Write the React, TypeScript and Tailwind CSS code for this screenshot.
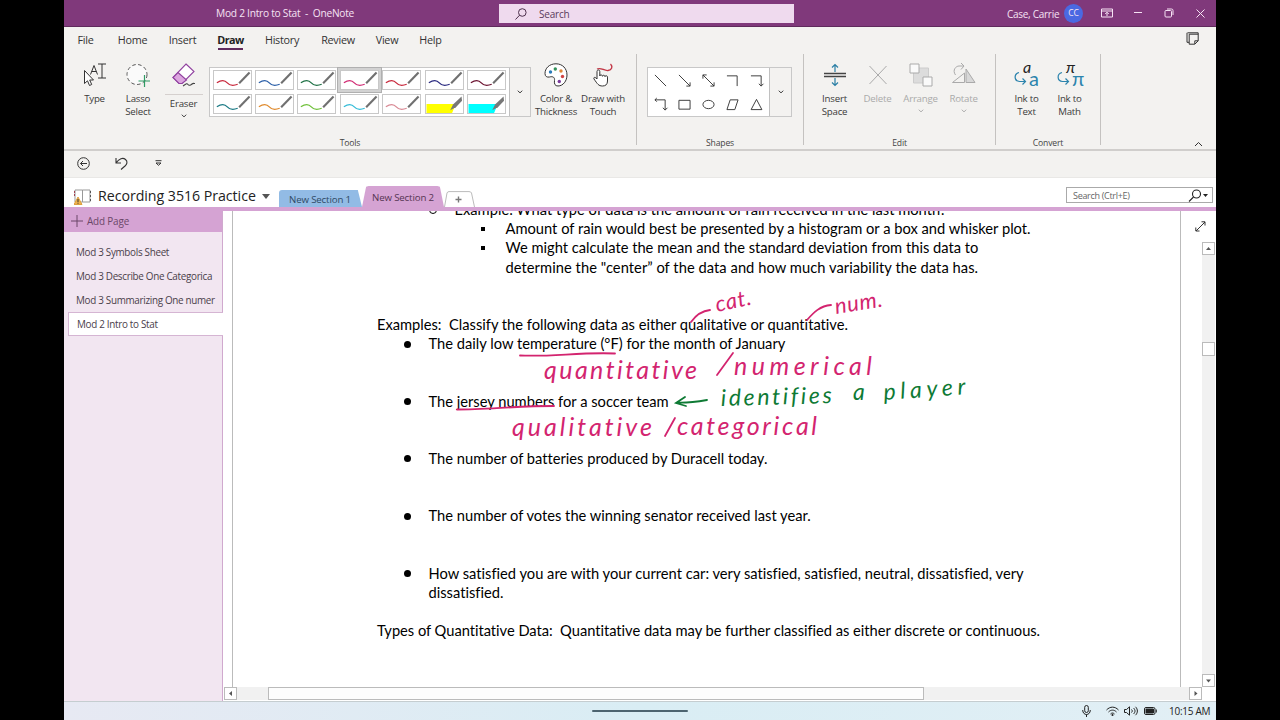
import type { ReactNode } from "react";
import clsx from "clsx";

const penRows = [
  ["#c8283c", "#2b5fa8", "#1e7145", "#d12c74", "#c8283c", "#2a2a80", "#6b1230"],
  ["#1b7a85", "#e08a2c", "#6fc03a", "#35bcd8", "#d98a95", "#ffff00", "#00ffff"],
];

const menuTabs = [
  { label: "File", className: "w-[17px]" },
  { label: "Home", className: "ml-6 w-[29px]" },
  { label: "Insert", className: "ml-[22px] w-[27px]" },
  { label: "Draw", className: "ml-[22px] w-[25px]" },
  { label: "History", className: "ml-[22px] w-[34px]" },
  { label: "Review", className: "ml-[22px] w-[34px]" },
  { label: "View", className: "ml-5 w-[24px]" },
  { label: "Help", className: "ml-5 w-[23px]" },
];

const pages = [
  "Mod 3 Symbols Sheet",
  "Mod 3 Describe One Categorica",
  "Mod 3 Summarizing One numer",
  "Mod 2 Intro to Stat",
];

const shapes: ReactNode[] = [
  <path d="M1 1l12 12" />,
  <path d="M1 1l12 12M13 9v4h-4" />,
  <path d="M1 1l12 12M13 9v4h-4M1 5V1h4" />,
  <path d="M1 2h11v11" />,
  <path d="M1 2h11v11M9.500 10.500l2.500 2.500 2.500-2.500" />,
  <path d="M1 2h11v11M9.500 10.500l2.500 2.500 2.500-2.500M3 0L1 2l2 2" />,
  <path d="M1 2.500h12v9.500H1z" />,
  <ellipse cx="7" cy="7" rx="6" ry="4.500" />,
  <path d="M4.500 2h8.500l-3.500 10.500H1z" />,
  <path d="M7 1.500l5.800 11H1.200z" />,
];

function TitleBar() {
  return (
    <div className="flex h-[27px] items-center border-b border-[#5f2a5c] bg-[#80397b] text-[#f6e3f4]">
      <div className="mt-[2px] ml-[152px] w-[283px] text-[10.200px] tracking-[-0.260px] whitespace-pre">
        Mod 2 Intro to Stat  -  OneNote
      </div>
      <div className="mt-px flex h-[19px] w-[295px] items-center bg-[#efdaee] text-[10px] tracking-[-0.200px] text-[#5c3b5b]">
        <svg className="ml-4 size-3" viewBox="0 0 12 12" fill="none" stroke="#4d304c">
          <circle cx="7.300" cy="4.500" r="3.800" />
          <path d="M4.600 7.200L0.500 11.500" />
        </svg>
        <span className="mt-px ml-3">Search</span>
      </div>
      <div className="mt-[2px] ml-[213px] w-[57px] text-[10px] tracking-[-0.280px] whitespace-nowrap">
        Case, Carrie
      </div>
      <div className="mt-px flex size-[19px] items-center justify-center rounded-full bg-[#4a69e2] text-[8.500px]">
        CC
      </div>
      <svg className="ml-[18px] h-[10px] w-3" viewBox="0 0 12 10" fill="none" stroke="currentColor">
        <path d="M.5 1h11v8H.5zM.5 3h11M6 8V4.500M4.200 6L6 4.200 7.800 6" />
      </svg>
      <svg className="ml-[21px] h-2 w-2" viewBox="0 0 8 8" stroke="currentColor">
        <path d="M0 3.500h8" />
      </svg>
      <svg className="ml-[22px] size-[10px]" viewBox="0 0 10 10" fill="none" stroke="currentColor">
        <rect x="1" y="2.500" width="6.500" height="6.500" rx="1" />
        <path d="M3 1h4.500Q9 1 9 2.500V7" />
      </svg>
      <svg className="ml-[22px] size-[9px]" viewBox="0 0 9 9" stroke="currentColor">
        <path d="M.5.5l8 8M8.500.5l-8 8" />
      </svg>
    </div>
  );
}

function MenuTabs() {
  return (
    <div className="flex h-[26px] items-center pl-[13px] text-[10.800px] text-[#333]">
      {menuTabs.map((tab) => (
        <div
          key={tab.label}
          className={clsx(
            "mt-px flex h-[19px] justify-center leading-[17px] whitespace-nowrap",
            tab.className,
            tab.label === "Draw"
              ? "border-b-2 border-[#5f2a5c] font-bold tracking-[-0.550px] text-[#222]"
              : "tracking-[-0.270px]",
          )}
        >
          {tab.label}
        </div>
      ))}
      <svg className="-mt-[3px] ml-[744px] size-[13px]" viewBox="0 0 13 13" fill="none" stroke="#333">
        <path d="M1.500.8h10.700v8l-3.400 3.400H3.200V2.200M1 .8v9.500h2M3.200 2.200h9M8.800 12V8.800h3.400" />
      </svg>
    </div>
  );
}

function Caret({ className }: { className?: string }) {
  return (
    <svg className={clsx("h-[4px] w-[6px]", className)} viewBox="0 0 6 4" fill="none" stroke="currentColor">
      <path d="M.8.7L3 2.900 5.200.7" />
    </svg>
  );
}

type CommandProps = {
  icon: ReactNode;
  lines: string[];
  className: string;
  disabled?: boolean;
  caret?: boolean;
};

function Command({ icon, lines, className, disabled, caret }: CommandProps) {
  return (
    <div
      className={clsx(
        "flex shrink-0 flex-col items-center pt-[9px] text-[9.700px] leading-[13px] tracking-[-0.220px] whitespace-nowrap",
        disabled ? "text-[#aaa]" : "text-[#3b3b3b]",
        className,
      )}
    >
      <div className="mb-[5px] flex h-6 items-center justify-center">{icon}</div>
      {lines.map((line) => (
        <span key={line}>{line}</span>
      ))}
      {caret && <Caret className="mt-1" />}
    </div>
  );
}

function Group({ label, className, children }: { label: string; className: string; children: ReactNode }) {
  return (
    <div className={clsx("flex shrink-0 flex-col border-r border-[#c4c2c0]", className)}>
      <div className="flex h-[82px]">{children}</div>
      <div className="h-[9px] pt-px text-center text-[8.600px] leading-[13px] tracking-[-0.150px] text-[#444]">
        {label}
      </div>
    </div>
  );
}

function Pen({ color, index, row }: { color: string; index: number; row: number }) {
  const highlighter = row === 1 && index > 4;
  const selected = row === 0 && index === 3;
  return (
    <div
      className={clsx(
        "flex h-[24px] w-[42.400px] items-center justify-center",
        selected && "bg-[#d2d2d2] outline outline-[#b0b0b0]",
      )}
    >
      <svg className="h-[20px] w-[39px] border border-[#c8c8c8] bg-white" viewBox="0 0 38 19" fill="none">
        {highlighter ? (
          <>
            <path d="M0 9.500h31l-4 9.500H0z" fill={color} />
            <path d="M37 1.500L28 10l-3 6 6-3 6.500-7z" fill="#777" />
          </>
        ) : (
          <>
            <path d="M2.500 12.500c5-3.500 8-3.500 11 0s7 3 11 1.500" stroke={color} strokeWidth="1.300" />
            <path d="M37 1.500L26 13" stroke="#707070" strokeWidth="2.200" />
          </>
        )}
      </svg>
    </div>
  );
}

function Gallery({ className, children }: { className: string; children: ReactNode }) {
  return (
    <div className={clsx("mt-[13px] flex h-[50px] shrink-0 border border-[#c8c8c8] bg-white", className)}>
      {children}
      <div className="flex flex-1 items-center justify-center border-l border-[#c0c0c0] bg-[#f3f2f0] text-[#333]">
        <Caret />
      </div>
    </div>
  );
}

function Ribbon() {
  return (
    <div className="flex h-[98px] border-b-2 border-[#d0cecc] pt-px pb-[4px]">
      <Group label="Tools" className="w-[573px]">
        <Command
          className="ml-[10px] w-[41px]"
          lines={["Type"]}
          icon={
            <svg className="size-6" viewBox="0 0 24 24" fill="none" stroke="#333">
              <path d="M1.500 7.500v13l3-2.700 2 4.700 2.200-1-2-4.500h3.800z" fill="#fff" />
              <path d="M7.500 11.500L11 2.500l3.500 9M8.700 8.500h4.600M15 1h8M19 1v14M15 15h8" />
            </svg>
          }
        />
        <Command
          className="w-[46px]"
          lines={["Lasso", "Select"]}
          icon={
            <svg className="size-6" viewBox="0 0 24 24" fill="none">
              <circle cx="11" cy="11.500" r="10" stroke="#555" strokeDasharray="3.500 2.500" fill="#fafafa" />
              <path d="M18.500 12v12M12.500 18h12" stroke="#2f9a63" strokeWidth="1.200" />
            </svg>
          }
        />
        <div className="flex w-[45px] flex-col items-center pt-[9px] text-[9.700px] leading-[13px] tracking-[-0.220px] text-[#3b3b3b]">
          <svg className="h-6 w-[26px]" viewBox="0 0 26 24" fill="none" stroke="#9142a0" strokeWidth="1.100">
            <path d="M15 1l8 7.500L11 20.500H8L2 14.500z" fill="#fff" />
            <path d="M7 9.500l8.500 7.500-4.500 3.500H8L2 14.500z" fill="#dca6df" />
            <path d="M12 23c3-2 4-3 5-1.500s3 .5 4-.5 2-.5 3-.5" stroke="#444" />
          </svg>
          <div className="mt-[7px] w-[38px] border-t border-[#d5d0ce]" />
          <span className="mt-[2px]">Eraser</span>
          <Caret className="mt-[4px]" />
        </div>
        <Gallery className="ml-[3px] w-[322px]">
          <div className="flex w-[299px] shrink-0 flex-col">
            {penRows.map((row, r) => (
              <div key={r} className="flex pl-px">
                {row.map((color, i) => (
                  <Pen key={i} color={color} index={i} row={r} />
                ))}
              </div>
            ))}
          </div>
        </Gallery>
        <Command
          className="w-[50px]"
          lines={["Color &", "Thickness"]}
          icon={
            <svg className="size-6" viewBox="0 0 24 24" fill="none">
              <path d="M12 .8C5 .8 1 5.500 1 10.500c0 3 2 4 4.500 3.500 3.500-1 5.500.5 5 3.500-.5 3.500.5 5.500 3.500 5.500 5 0 9-5 9-11C23 5.500 18.500.8 12 .8z" fill="#fff" stroke="#333" />
              <circle cx="6.500" cy="9" r="1.700" fill="#2a7ab8" />
              <circle cx="11.300" cy="6" r="1.700" fill="#33915a" />
              <circle cx="17" cy="8" r="1.700" fill="#e08534" />
              <circle cx="18.500" cy="13.500" r="1.700" fill="#d04242" />
              <circle cx="15.300" cy="18.500" r="1.700" fill="#7a3a9a" />
            </svg>
          }
        />
        <Command
          className="w-[44px]"
          lines={["Draw with", "Touch"]}
          icon={
            <svg className="size-6" viewBox="0 0 24 24" fill="none">
              <path d="M6 6c4-2 7 2 11 1.500s5-4 2.500-6.500" stroke="#c23443" strokeWidth="1.300" />
              <path d="M6 16V8.500c0-2 2.800-2 2.800 0v4.500c0-1.500 2.700-1.300 2.700.3 0-1.500 2.500-1.300 2.500.3 0-1.300 2.500-1.200 2.500.5V18c0 3.500-2 5-5 5-4 0-5-2-8.500-7-.8-1.700 1-2.500 3 0z" fill="#fff" stroke="#333" />
            </svg>
          }
        />
      </Group>

      <Group label="Shapes" className="w-[167px]">
        <Gallery className="ml-[10px] w-[145px]">
          <div className="grid w-[121px] shrink-0 grid-cols-5">
            {shapes.map((shape, i) => (
              <div key={i} className="flex h-6 items-center justify-center">
                <svg className="size-[13px] overflow-visible" viewBox="0 0 14 14" fill="none" stroke="#333">
                  {shape}
                </svg>
              </div>
            ))}
          </div>
        </Gallery>
      </Group>

      <Group label="Edit" className="w-[192px]">
        <Command
          className="ml-[9px] w-[43px]"
          lines={["Insert", "Space"]}
          icon={
            <svg className="size-6" viewBox="0 0 24 24" fill="none">
              <path d="M1 10.500h22M1 13.500h22" stroke="#444" strokeWidth="1.300" />
              <path d="M12 9V1.500M9 4.500l3-3 3 3M12 15v7.500M9 19.500l3 3 3-3" stroke="#2a7fa5" strokeWidth="1.200" />
            </svg>
          }
        />
        <Command
          className="w-[43px]"
          disabled
          lines={["Delete"]}
          icon={
            <svg className="size-6" viewBox="0 0 24 24" stroke="#aaa">
              <path d="M3.500 3l17 18M20.500 3l-17 18" />
            </svg>
          }
        />
        <Command
          className="w-[43px]"
          disabled
          caret
          lines={["Arrange"]}
          icon={
            <svg className="size-6" viewBox="0 0 24 24" stroke="#aaa">
              <path d="M4.500 5h15v15h-15z" fill="#dcdcdc" stroke="#ccc" />
              <path d="M1 1h9v9H1zM14 14h9v9h-9z" fill="#fafafa" />
            </svg>
          }
        />
        <Command
          className="w-[43px]"
          disabled
          caret
          lines={["Rotate"]}
          icon={
            <svg className="size-6" viewBox="0 0 24 24" fill="none" stroke="#aaa">
              <path d="M14 6v13.500h9z" fill="#d8d8d8" />
              <path d="M12.500 10v9.500H.5z" />
              <path d="M3.500 12C0 7 4 3 7 3h5M9 0l3 3-3 3.500" />
            </svg>
          }
        />
      </Group>

      <Group label="Convert" className="w-[105px]">
        <Command
          className="ml-[9px] w-[43px]"
          lines={["Ink to", "Text"]}
          icon={<ConvertIcon glyph="a" />}
        />
        <Command
          className="w-[43px]"
          lines={["Ink to", "Math"]}
          icon={<ConvertIcon glyph="π" />}
        />
      </Group>
      <svg className="mt-auto -mb-[2px] ml-[93px] h-[6px] w-[9px]" viewBox="0 0 9 6" fill="none" stroke="#333">
        <path d="M1 5l3.500-3.500L8 5" />
      </svg>
    </div>
  );
}

function ConvertIcon({ glyph }: { glyph: string }) {
  return (
    <svg className="h-6 w-7 overflow-visible" viewBox="0 0 28 24" fill="none">
      <text x="10" y="9.500" fontSize="16" fontStyle="italic" fill="#222" className="font-['Lato']">
        {glyph}
      </text>
      <text x="16" y="23" fontSize="20" fill="#2c84ad" className="font-['Lato']">
        {glyph}
      </text>
      <path d="M6 9.500C.5 11 1 18 6.500 18.500h6M9.500 15.500l3 3-3 3" stroke="#2c84ad" strokeWidth="1.200" />
    </svg>
  );
}

function QuickAccess() {
  return (
    <div className="flex h-[27px] items-center border-b border-[#e9e8e6] pb-[2px] pl-[13px]">
      <svg className="size-[13px]" viewBox="0 0 13 13" fill="none" stroke="#333">
        <circle cx="6.500" cy="6.500" r="5.800" />
        <path d="M10 6.500H3.500M6 4L3.500 6.500 6 9" />
      </svg>
      <svg className="ml-[25px] size-[13px]" viewBox="0 0 13 13" fill="none" stroke="#333" strokeWidth="1.100">
        <path d="M1 1v5h5M1 6C4 1.500 8 .3 10.500 2.500s1.500 4.500-.5 6.500L6 12.500" />
      </svg>
      <svg className="ml-[27px] h-[6px] w-[7px]" viewBox="0 0 7 6" fill="none" stroke="#333">
        <path d="M.5.7h6M1 3l2.500 2.300L6 3z" />
      </svg>
    </div>
  );
}

function NotebookBar() {
  return (
    <div className="flex h-[29px] items-end bg-white">
      <svg className="mb-[2px] ml-[10px] h-4 w-[18px]" viewBox="0 0 18 16" fill="none" stroke="#999">
        <path d="M1 1h7.500v12H1zM8.500 1H16v12H8.500z" fill="#fff" />
        <path d="M16.500 2v10" stroke="#555" strokeDasharray="2 2" />
        <path d="M.5 2v5" stroke="#a04050" strokeDasharray="2 1" />
        <path d="M4 8L8 15.500H0z" fill="#efb24c" stroke="#dda040" />
        <path d="M4 10v3M4 13.700v1" stroke="#333" />
      </svg>
      <div className="ml-[6px] h-[22px] w-[160px] text-[14.200px] leading-[22px] tracking-[-0.040px] whitespace-nowrap text-[#222]">
        Recording 3516 Practice
      </div>
      <svg className="mb-2 ml-[4px] h-[5px] w-2" viewBox="0 0 8 5">
        <path d="M0 0h8L4 5z" fill="#555" />
      </svg>
      <div className="ml-[9px] h-[17px] w-[83px] rounded-tl-[3px] bg-[#92bbe5] pl-[10px] text-[9.700px] leading-[20px] tracking-[-0.150px] whitespace-nowrap text-[#2f4964] [clip-path:polygon(0_0,95%_0,100%_100%,0_100%)]">
        New Section 1
      </div>
      <div className="h-[21px] w-[82px] bg-[#d5a3d3] pl-[10px] text-[9.700px] leading-[23px] tracking-[-0.150px] whitespace-nowrap text-[#553452] [clip-path:polygon(5%_4%,8%_0,92%_0,95%_4%,100%_100%,0_100%)]">
        New Section 2
      </div>
      <svg className="h-4 w-[31px]" viewBox="0 0 31 16" fill="none" stroke="#bbb">
        <path d="M.5 16L3 2Q3.500.6 5 .6h20Q27 .6 27.500 2L30.500 16" />
        <path d="M11.500 8.500h6M14.500 5.500v6" stroke="#777" strokeWidth="1.400" />
      </svg>
      <div className="mb-1 ml-[591px] flex h-[16px] w-[147px] items-center border border-[#aaa] pl-[6px] text-[9px] tracking-[-0.300px] text-[#666]">
        <span className="mt-px">Search (Ctrl+E)</span>
        <svg className="ml-auto h-[13px] w-[14px]" viewBox="0 0 14 13" fill="none" stroke="#222" strokeWidth="1.100">
          <circle cx="8.500" cy="5" r="4" />
          <path d="M5.500 8L1 12.500" />
        </svg>
        <svg className="mr-1 ml-[1px] h-[3px] w-[5px]" viewBox="0 0 5 3">
          <path d="M0 0h5L2.500 3z" fill="#222" />
        </svg>
      </div>
    </div>
  );
}

function Sidebar() {
  return (
    <div className="w-[159px] shrink-0 border-r border-[#d0a9ce] bg-[#f2e6f1] text-[9.900px] text-[#4a404a]">
      <div className="flex h-[21px] items-center bg-[#d5a3d3] pb-px pl-[7px] tracking-[-0.150px] text-[#6a4768]">
        <svg className="mr-1 -mt-px size-3" viewBox="0 0 12 12" stroke="#6a4768">
          <path d="M6 0v12M0 6h12" />
        </svg>
        Add Page
      </div>
      <div className="flex flex-col pt-2 pl-1">
        {pages.map((page, i) => (
          <div
            key={page}
            className={clsx(
              "h-6 pl-[8px] leading-6 tracking-[-0.310px] whitespace-nowrap",
              i === 3 && "-mr-px border border-r-0 border-[#d5b5d3] bg-white pl-[7px] leading-[22px]",
            )}
          >
            {page}
          </div>
        ))}
      </div>
    </div>
  );
}

function Bullet({ children }: { children: ReactNode }) {
  return (
    <div className="flex">
      <span className="mt-[6.500px] mr-[17.500px] ml-[27px] size-[7px] rounded-full bg-black" />
      <span>{children}</span>
    </div>
  );
}

function SubBullet({ children }: { children: ReactNode }) {
  return (
    <div className="flex">
      <span className="mt-[7.500px] mr-[21px] ml-[103.500px] size-[4px] bg-black" />
      <span>{children}</span>
    </div>
  );
}

function Notes() {
  return (
    <div className="-mt-[10.800px] font-['Lato',sans-serif] text-[14.700px] leading-[19.140px] whitespace-pre text-black [font-variant-ligatures:none]">
      <div className="flex">
        <span className="mt-[6px] mr-[17.500px] ml-[52px] size-[8px] rounded-full border border-black" />
        Example: What type of data is the amount of rain received in the last month?
      </div>
      <SubBullet>Amount of rain would best be presented by a histogram or a box and whisker plot.</SubBullet>
      <SubBullet>
        {"We might calculate the mean and the standard deviation from this data to\n"}
        <span className="tracking-[0.050px]">
          determine the "center” of the data and how much variability the data has.
        </span>
      </SubBullet>
      <div className="mt-[38.280px] tracking-[-0.015px]">
        Examples:  Classify the following data as either qualitative or quantitative.
      </div>
      <div className="flex flex-col gap-[38.280px]">
        <Bullet>The daily low temperature (°F) for the month of January</Bullet>
        <Bullet>The jersey numbers for a soccer team</Bullet>
        <Bullet>The number of batteries produced by Duracell today.</Bullet>
        <Bullet>The number of votes the winning senator received last year.</Bullet>
        <Bullet>
          {"How satisfied you are with your current car: very satisfied, satisfied, neutral, dissatisfied, very\ndissatisfied."}
        </Bullet>
      </div>
      <div className="mt-[19.140px] tracking-[-0.030px]">
        Types of Quantitative Data:  Quantitative data may be further classified as either discrete or continuous.
      </div>
    </div>
  );
}

// Pen strokes and handwritten words lying over the typed notes
function Ink() {
  return (
    <svg
      className="pointer-events-none absolute top-0 left-0 h-[476px] w-[948px] font-['Lato',sans-serif] italic [font-variant-ligatures:none]"
      viewBox="233 211 948 476"
      fill="none"
      strokeLinecap="round"
    >
      <g stroke="#d3246f" strokeWidth="1.800">
        <path d="M691 322c5-7 10-11 19-12" />
        <path d="M807 320c7-8 13-14 24-15" />
        <path d="M520 355.500c32 1.500 60-3.500 95-2" />
        <path d="M457 409.500c30 0 60-3.500 97-3.500" />
        <path d="M717 375l16-22M665 436l10-18" />
      </g>
      <g fill="#d3246f">
        <text x="717" y="312" fontSize="22" textLength="36" transform="rotate(-12 717 312)">cat.</text>
        <text x="836" y="314" fontSize="22" textLength="48" transform="rotate(-9 836 314)">num.</text>
        <text x="544" y="379" fontSize="25" textLength="153">quantitative</text>
        <text x="734" y="375" fontSize="25" textLength="138">numerical</text>
        <text x="512" y="436" fontSize="25" textLength="140">qualitative</text>
        <text x="677" y="435" fontSize="25" textLength="140">categorical</text>
      </g>
      <path d="M707 400c-12 2-20 3-30 2.500M685 397l-9 6 10 3" stroke="#0e7a34" strokeWidth="1.800" />
      <g fill="#0e7a34">
        <text x="721" y="406" fontSize="23" textLength="111" transform="rotate(-1.500 721 406)">identifies</text>
        <text x="853" y="400" fontSize="23" textLength="15">a</text>
        <text x="884" y="400" fontSize="23" textLength="82" transform="rotate(-4 884 400)">player</text>
      </g>
    </svg>
  );
}

function ScrollButton({ d, className }: { d: string; className?: string }) {
  return (
    <svg className={clsx("size-[13px] shrink-0 border border-[#bbb] bg-white", className)} viewBox="0 0 11 11">
      <path d={d} fill="#555" />
    </svg>
  );
}

function Canvas() {
  return (
    <div className="flex min-w-0 flex-1 flex-col">
      <div className="flex h-[476px]">
        <div className="relative ml-[9px] w-[949px] shrink-0 overflow-hidden border-x border-[#bbb] pl-[144px]">
          <Notes />
          <Ink />
        </div>
        <div className="flex flex-1 flex-col items-end">
          <svg className="mt-[10px] mr-[10px] size-[11px] shrink-0" viewBox="0 0 11 11" fill="none" stroke="#333">
            <path d="M1 10l9-9M6.500.8H10v3.700M.8 6.500V10h3.700" />
          </svg>
          <div className="mt-[10px] mr-px flex w-[13px] flex-1 flex-col bg-[#f1f1f1]">
            <ScrollButton d="M3 7h5L5.500 4z" />
            <div className="mt-[87px] h-[14px] border border-[#bbb] bg-white" />
            <ScrollButton className="mt-auto" d="M3 4.500h5L5.500 7.500z" />
          </div>
        </div>
      </div>
      <div className="flex h-[14px] pr-[14px] pl-px">
        <ScrollButton d="M7 3v5L4 5.500z" />
        <div className="h-[13px] flex-1 bg-[#f1f1f1] pl-[31px]">
          <div className="h-[13px] w-[656px] border border-[#bbb] bg-[#fdfdfd]" />
        </div>
        <ScrollButton d="M4.500 3v5l3-2.500z" />
      </div>
    </div>
  );
}

function Taskbar() {
  return (
    <div className="flex h-[19px] items-center border-t border-[#c5cdd0] bg-gradient-to-r from-[#e7e9f3] via-[#d9edf4] to-[#e2eff5]">
      <div className="ml-[528px] h-[2px] w-[96px] rounded bg-[#4d6470]" />
      <svg className="ml-[394px] h-3 w-[9px]" viewBox="0 0 9 12" fill="none" stroke="#222">
        <rect x="2.700" y=".5" width="3.600" height="7" rx="1.800" />
        <path d="M.7 5c0 6 7.600 6 7.600 0M4.500 9.500V12" />
      </svg>
      <svg className="ml-[15px] h-[10px] w-[13px]" viewBox="0 0 13 10" fill="none" stroke="#222">
        <path d="M.5 4C4 .2 9 .2 12.500 4M2.500 6c2.500-2.500 5.500-2.500 8 0M4.500 8c1.200-1.300 2.800-1.300 4 0" />
        <circle cx="6.500" cy="9" r=".7" fill="#222" />
      </svg>
      <svg className="ml-[5px] h-[10px] w-[14px]" viewBox="0 0 14 10" fill="none" stroke="#222">
        <path d="M.5 3.500h2l3-2.700v8.400l-3-2.700h-2zM7.500 3.500c1 1 1 2 0 3M9.500 2c2 2 2 4 0 6M11.500.8c2.500 2.500 2.500 6 0 8.400" />
      </svg>
      <svg className="ml-[6px] h-2 w-[13px]" viewBox="0 0 13 8" fill="none" stroke="#222">
        <rect x=".5" y=".5" width="10.500" height="7" rx="1.500" />
        <path d="M2 2h7.500v4H2z" fill="#222" />
        <path d="M12.300 2.500v3" />
      </svg>
      <span className="ml-[12px] text-[10px] tracking-[-0.280px] whitespace-nowrap text-[#222]">10:15 AM</span>
    </div>
  );
}

export default function App() {
  return (
    <div className="flex h-[720px] w-[1280px] justify-center overflow-hidden bg-black font-['Open_Sans',sans-serif]">
      <div className="flex w-[1152px] flex-col bg-[#f3f2f0]">
        <TitleBar />
        <MenuTabs />
        <Ribbon />
        <QuickAccess />
        <NotebookBar />
        <div className="h-1 shrink-0 bg-[#d5a3d3]" />
        <div className="flex h-[490px] bg-white">
          <Sidebar />
          <Canvas />
        </div>
        <Taskbar />
      </div>
    </div>
  );
}
